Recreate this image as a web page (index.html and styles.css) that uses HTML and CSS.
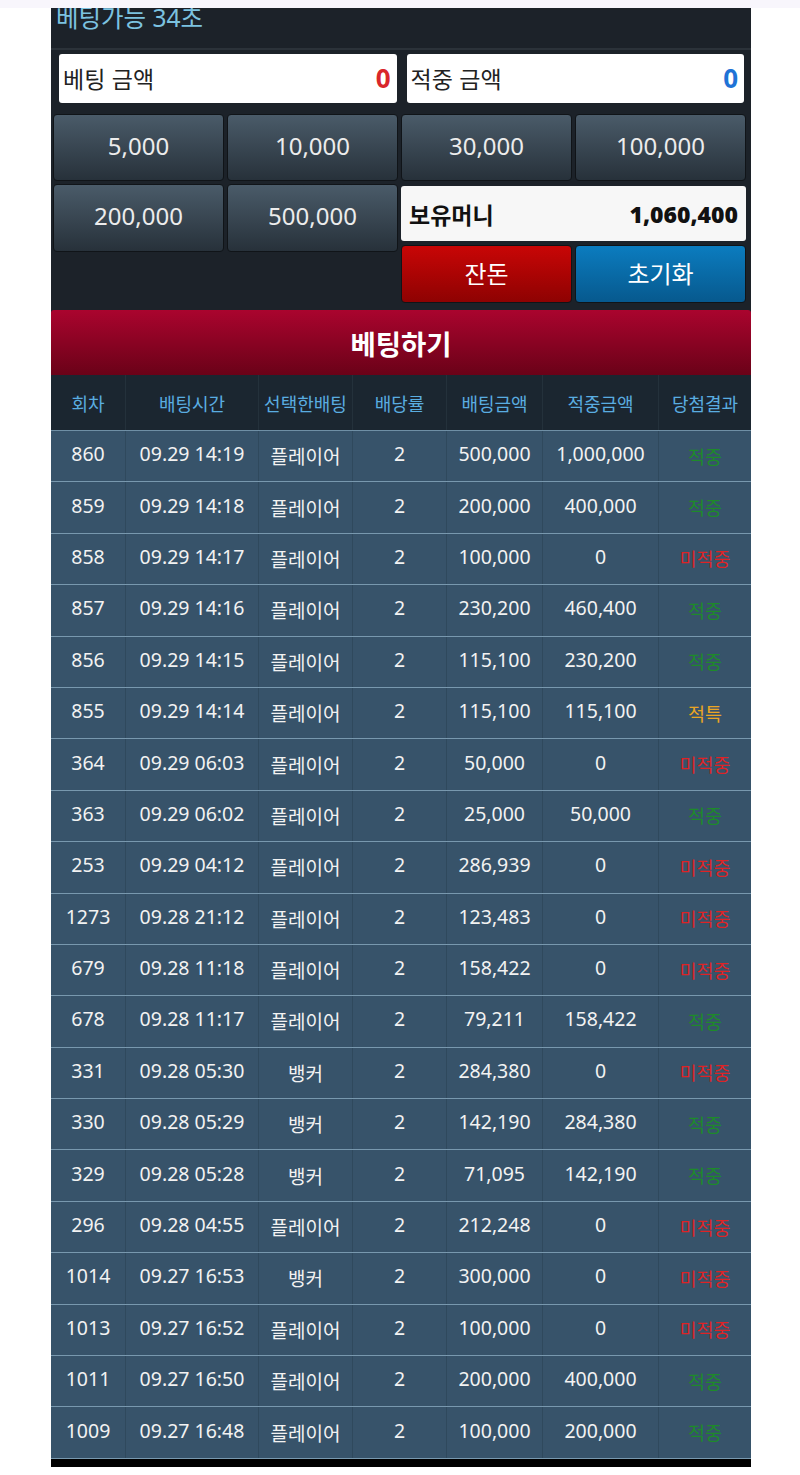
FILE: index.html
```html
<!DOCTYPE html>
<html lang="ko">
<head>
    <meta charset="UTF-8">
    <meta name="viewport" content="width=device-width, initial-scale=1.0">
    <title>베팅</title>
    <link rel="stylesheet" href="styles.css">
</head>
<body>
    <div class="topbar"></div>
    <div class="container">
        <div class="timer">
            <span>베팅가능 34초</span>
        </div>
        <div class="amounts">
            <div class="amount-box">
                <span>베팅 금액</span>
                <b class="red">0</b>
            </div>
            <div class="amount-box">
                <span>적중 금액</span>
                <b class="blue">0</b>
            </div>
        </div>
        <div class="controls">
            <div class="chips">
                <button class="chip">5,000</button>
                <button class="chip">10,000</button>
                <button class="chip">200,000</button>
                <button class="chip">500,000</button>
            </div>
            <div class="side">
                <button class="chip">30,000</button>
                <button class="chip">100,000</button>
                <div class="money">
                    <span>보유머니</span>
                    <b>1,060,400</b>
                </div>
                <button class="action change">잔돈</button>
                <button class="action reset">초기화</button>
            </div>
        </div>
        <button class="bet-btn">베팅하기</button>
        <table class="history">
            <thead>
                <tr>
                    <th style="width:74px">회차</th>
                    <th style="width:132px">배팅시간</th>
                    <th style="width:93px">선택한배팅</th>
                    <th style="width:93px">배당률</th>
                    <th style="width:95px">배팅금액</th>
                    <th style="width:115px">적중금액</th>
                    <th>당첨결과</th>
                </tr>
            </thead>
            <tbody id="historyBody"></tbody>
        </table>
        <div class="bottom"></div>
    </div>

    <script>
        // round, time, pick, odds, bet, win, result
        const rows = [
            ['860', '09.29 14:19', '플레이어', '2', '500,000', '1,000,000', 'win'],
            ['859', '09.29 14:18', '플레이어', '2', '200,000', '400,000', 'win'],
            ['858', '09.29 14:17', '플레이어', '2', '100,000', '0', 'lose'],
            ['857', '09.29 14:16', '플레이어', '2', '230,200', '460,400', 'win'],
            ['856', '09.29 14:15', '플레이어', '2', '115,100', '230,200', 'win'],
            ['855', '09.29 14:14', '플레이어', '2', '115,100', '115,100', 'tie'],
            ['364', '09.29 06:03', '플레이어', '2', '50,000', '0', 'lose'],
            ['363', '09.29 06:02', '플레이어', '2', '25,000', '50,000', 'win'],
            ['253', '09.29 04:12', '플레이어', '2', '286,939', '0', 'lose'],
            ['1273', '09.28 21:12', '플레이어', '2', '123,483', '0', 'lose'],
            ['679', '09.28 11:18', '플레이어', '2', '158,422', '0', 'lose'],
            ['678', '09.28 11:17', '플레이어', '2', '79,211', '158,422', 'win'],
            ['331', '09.28 05:30', '뱅커', '2', '284,380', '0', 'lose'],
            ['330', '09.28 05:29', '뱅커', '2', '142,190', '284,380', 'win'],
            ['329', '09.28 05:28', '뱅커', '2', '71,095', '142,190', 'win'],
            ['296', '09.28 04:55', '플레이어', '2', '212,248', '0', 'lose'],
            ['1014', '09.27 16:53', '뱅커', '2', '300,000', '0', 'lose'],
            ['1013', '09.27 16:52', '플레이어', '2', '100,000', '0', 'lose'],
            ['1011', '09.27 16:50', '플레이어', '2', '200,000', '400,000', 'win'],
            ['1009', '09.27 16:48', '플레이어', '2', '100,000', '200,000', 'win']
        ];

        const labels = { win: '적중', lose: '미적중', tie: '적특' };
        const body = document.getElementById('historyBody');

        rows.forEach(r => {
            const tr = document.createElement('tr');
            tr.innerHTML = `
                <td>${r[0]}</td>
                <td>${r[1]}</td>
                <td class="pick">${r[2]}</td>
                <td>${r[3]}</td>
                <td>${r[4]}</td>
                <td>${r[5]}</td>
                <td class="result ${r[6]}">${labels[r[6]]}</td>
            `;
            body.appendChild(tr);
        });
    </script>
</body>
</html>
```

FILE: styles.css
```css
body {
    margin: 0;
    padding: 0;
    background-color: #fff;
    font-family: "Noto Sans", "Noto Sans CJK KR", sans-serif;
}

.topbar {
    height: 8px;
    background-color: #f8f6fc;
}

.container {
    width: 700px;
    margin-left: 51px;
    background-color: #1c2229;
}

.timer {
    height: 40px;
    overflow: hidden;
    border-bottom: 2px solid #2b3239;
}

.timer span {
    display: block;
    margin: -5px 0 0 5px;
    font-size: 24.5px;
    line-height: 30px;
    color: #7cc3e0;
}

.amounts {
    display: flex;
    gap: 10px;
    padding: 4px 7px 0 8px;
    height: 54px;
}

.amount-box {
    flex: 1;
    height: 49px;
    display: flex;
    align-items: center;
    justify-content: space-between;
    padding: 0 6px 2px 4px;
    box-sizing: border-box;
    background-color: #fff;
    border-radius: 3px;
    font-size: 23px;
    color: #222;
    font-family: "Noto Sans CJK KR", sans-serif;
}

.amount-box b {
    font-family: "Noto Sans", sans-serif;
    font-size: 26px;
}

.red {
    color: #d9262b;
}

.blue {
    color: #1f73d6;
}

.controls {
    display: flex;
    gap: 3px;
    padding: 6px 5px 7px 2px;
}

.chips {
    flex: 1;
    display: grid;
    grid-template-columns: 1fr 1fr;
    grid-template-rows: 67px 68px;
    gap: 3px;
    align-content: start;
}

.side {
    flex: 1;
    display: grid;
    grid-template-columns: 1fr 1fr;
    grid-template-rows: 67px 56px 58px;
    column-gap: 3px;
    row-gap: 4px;
}

.side .money {
    margin-top: 1px;
}

button {
    font-family: "Noto Sans", "Noto Sans CJK KR", sans-serif;
    cursor: pointer;
}

.chip {
    background: linear-gradient(#4a5b69, #27313a);
    border: 1px solid #101418;
    border-radius: 4px;
    color: #ececec;
    font-size: 24px;
    padding: 0 0 5px;
}

.money {
    grid-column: span 2;
    display: flex;
    align-items: center;
    justify-content: space-between;
    padding: 0 8px;
    background-color: #f7f7f7;
    border-radius: 3px;
    color: #111;
    font-weight: bold;
    font-size: 23px;
}

.money span {
    font-family: "Noto Sans CJK KR", sans-serif;
}

.action {
    border: 1px solid #101418;
    border-radius: 4px;
    color: #fff;
    font-size: 24px;
    padding: 0 0 3px;
    font-family: "Noto Sans CJK KR", sans-serif;
}

.change {
    background: linear-gradient(#c80606, #8e0202);
}

.reset {
    background: linear-gradient(#0b7cbf, #07598e);
}

.bet-btn {
    display: block;
    width: 100%;
    height: 65px;
    border: none;
    border-radius: 3px 3px 0 0;
    background: linear-gradient(#aa042e, #6a0218);
    color: #fff;
    font-size: 27.5px;
    font-weight: bold;
    font-family: "Noto Sans CJK KR", sans-serif;
}

.history {
    width: 100%;
    border-collapse: collapse;
    table-layout: fixed;
}

.history th {
    height: 55px;
    padding: 0;
    background-color: #1b2630;
    color: #5aade0;
    font-size: 18px;
    font-weight: normal;
    font-family: "Noto Sans CJK KR", sans-serif;
    border-left: 1px solid #24313b;
    border-bottom: 1px solid #6f8fa5;
}

.history th:first-child,
.history td:first-child {
    border-left: none;
}

.history tr {
    height: 51.4px;
}

.history td {
    padding: 0 0 5px;
    text-align: center;
    background-color: #37536a;
    color: #f2f2f2;
    font-size: 19.5px;
    border-left: 1px solid #2f495d;
    border-bottom: 1px solid #7898ae;
}

.history td.pick {
    font-family: "Noto Sans CJK KR", sans-serif;
    font-size: 19px;
    padding: 0 0 1px;
}

.history td.result {
    font-family: "Noto Sans CJK KR", sans-serif;
    font-size: 18.5px;
    padding: 0 0 1px;
}

.win {
    color: #1e8a2a !important;
}

.lose {
    color: #de2326 !important;
}

.tie {
    color: #eaa523 !important;
}

.bottom {
    height: 8px;
    background-color: #000;
}
```
